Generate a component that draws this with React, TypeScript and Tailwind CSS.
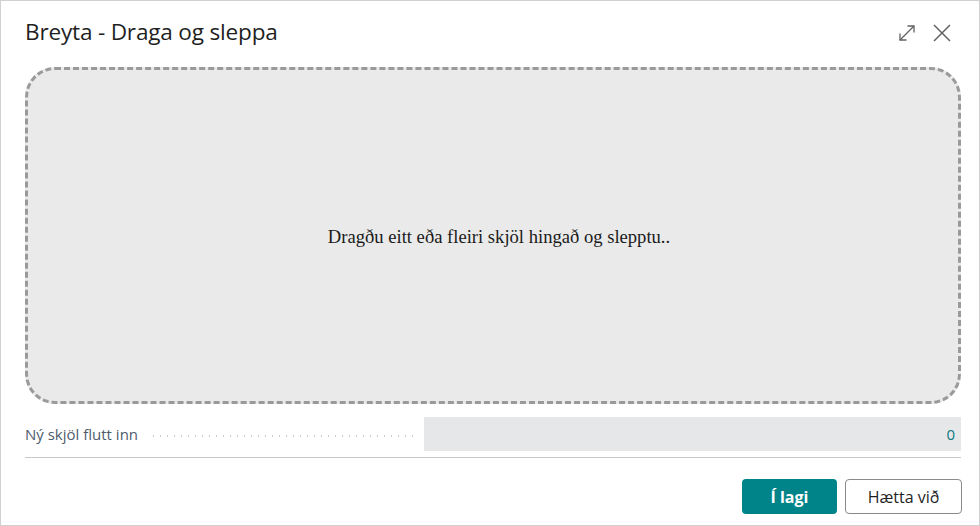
import React from 'react';

function ExpandIcon() {
  return (
    <svg width="18" height="18" viewBox="0 0 18 18" fill="none" stroke="#616161" strokeWidth="1.3">
      <path d="M2 16 L16 2" />
      <path d="M9.5 2 H16 V8.5" />
      <path d="M2 9.5 V16 H8.5" />
    </svg>
  );
}

function CloseIcon() {
  return (
    <svg width="18" height="18" viewBox="0 0 18 18" fill="none" stroke="#616161" strokeWidth="1.5">
      <path d="M1 1 L17 17 M17 1 L1 17" />
    </svg>
  );
}

export default function App() {
  return (
    <div className="w-[980px] h-[526px] bg-white border border-[#d0d0d0] flex flex-col font-['Open_Sans','Noto_Sans',sans-serif] overflow-hidden">
      {/* header */}
      <div className="flex justify-between items-start pl-6 pr-7 pt-[15px] h-[66px] shrink-0">
        <h1 className="text-[22.6px] leading-[32px] text-[#1f1f1f] tracking-[-0.2px]">Breyta - Draga og sleppa</h1>
        <div className="flex items-center gap-[17px] pt-[8px]">
          <ExpandIcon />
          <CloseIcon />
        </div>
      </div>

      {/* drop zone */}
      <div className="mx-6 mr-[18px] h-[337px] rounded-[30px] border-[3px] border-dashed border-[#9a9a9a] bg-[#eaeaea] flex items-center justify-center shrink-0">
        <span className="font-['Liberation_Serif',serif] text-[18.6px] text-[#1a1a1a] mt-[2px] ml-[12px]">
          Dragðu eitt eða fleiri skjöl hingað og slepptu..
        </span>
      </div>

      {/* field */}
      <div className="mx-6 mr-[18px] mt-[13px] flex items-center h-[34px]">
        <span className="text-[15px] text-[#505c6d] whitespace-nowrap">Ný skjöl flutt inn</span>
        <span className="flex-1 ml-[12px] mr-[8px] mt-[4px] h-[2px] bg-[radial-gradient(circle,#cccccc_0.9px,transparent_1.1px)] bg-[length:7px_2px]"></span>
        <div className="w-[537px] h-[34px] bg-[#e6e7e8] flex items-center justify-end pr-[6px] text-[15px] text-[#0e7a80]">
          0
        </div>
      </div>
      <div className="mx-6 mr-[18px] mt-[6px] border-t border-[#c8c8c8]"></div>

      {/* footer */}
      <div className="flex justify-end gap-2 pr-[17px] mt-[21px]">
        <button className="w-[95px] h-[35px] rounded-[4px] bg-[#008489] text-white text-[16px] font-bold">
          Í lagi
        </button>
        <button className="w-[117px] h-[35px] rounded-[4px] bg-white border border-[#8a8a8a] text-[#1f1f1f] text-[16px]">
          Hætta við
        </button>
      </div>
    </div>
  );
}
